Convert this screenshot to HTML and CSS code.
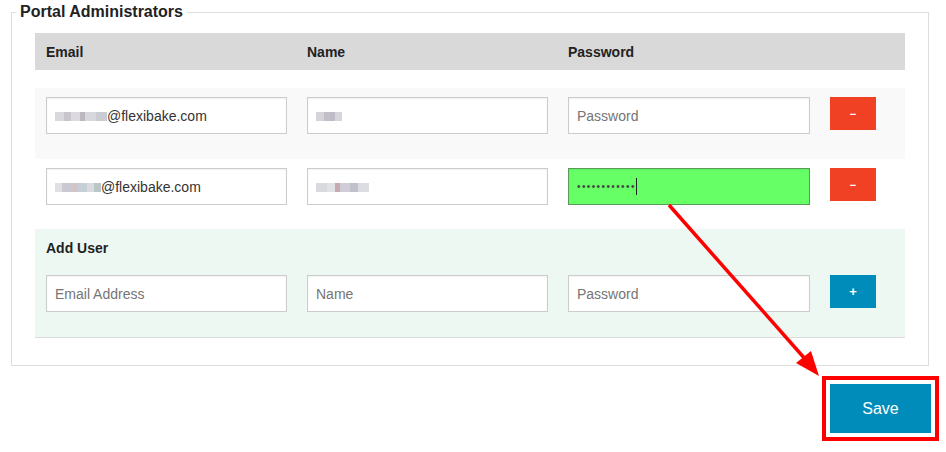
FILE: index.html
```html
<!DOCTYPE html>
<html lang="en">
<head>
    <meta charset="UTF-8">
    <title>Portal Administrators</title>
    <link rel="stylesheet" href="styles.css">
</head>
<body>
    <fieldset class="admins">
        <legend>Portal Administrators</legend>
        <div class="panel">
            <!-- header -->
            <div class="grid-row head">
                <div>Email</div>
                <div>Name</div>
                <div>Password</div>
                <div></div>
            </div>
            <div class="spacer"></div>

            <div class="grid-row user odd">
                <div class="field"><span class="mosaic m1"></span>@flexibake.com</div>
                <div class="field"><span class="mosaic m2"></span></div>
                <div class="field placeholder">Password</div>
                <button class="btn remove">&minus;</button>
            </div>

            <div class="grid-row user">
                <div class="field"><span class="mosaic m3"></span>@flexibake.com</div>
                <div class="field"><span class="mosaic m4"></span></div>
                <div class="field active">&bull;&bull;&bull;&bull;&bull;&bull;&bull;&bull;&bull;&bull;&bull;&bull;<span class="caret"></span></div>
                <button class="btn remove">&minus;</button>
            </div>

            <!-- add user -->
            <div class="add-user">
                <div class="add-title">Add User</div>
                <div class="grid-row inner">
                    <input type="text" placeholder="Email Address">
                    <input type="text" placeholder="Name">
                    <input type="password" placeholder="Password">
                    <button class="btn add">+</button>
                </div>
            </div>
        </div>
    </fieldset>

    <div class="actions">
        <div class="highlight">
            <button class="save-btn">Save</button>
        </div>
    </div>

    <svg class="arrow" width="946" height="452" viewBox="0 0 946 452">
        <line x1="669" y1="205" x2="806" y2="360" stroke="#ff0000" stroke-width="3.5"/>
        <polygon points="819,376 796,363 811,351" fill="#ff0000"/>
    </svg>
</body>
</html>
```

FILE: styles.css
```css
:root {
    --border: #dddddd;
    --input-border: #cccccc;
    --head-bg: #d9d9d9;
    --odd-bg: #f9f9f9;
    --add-bg: #eef8f2;
    --alert: #f04124;
    --primary: #008cba;
}

body {
    font-family: 'Liberation Sans', Arial, sans-serif;
    margin: 0;
    padding: 3px 7px 0 11px;
    color: #222222;
    background: #ffffff;
    position: relative;
}

.admins {
    margin: 0 10px 0 0;
    padding: 0 4px 27px;
    border: 1px solid var(--border);
}

.admins legend {
    font-size: 16px;
    font-weight: bold;
    padding: 0 4px;
    line-height: 18px;
    color: #222222;
}

.panel {
    margin: 12px 19px 0;
    border-bottom: 1px solid var(--border);
}

.grid-row {
    display: grid;
    grid-template-columns: 241px 241px 242px 46px;
    column-gap: 20px;
    padding: 0 11px;
}

.head {
    background: var(--head-bg);
    height: 37px;
    align-items: center;
    font-size: 14px;
    font-weight: bold;
}

.spacer {
    height: 18px;
}

.user {
    padding-top: 9px;
    padding-bottom: 24px;
    align-items: start;
}

.odd {
    background: var(--odd-bg);
    padding-bottom: 25px;
}

.field,
.grid-row input {
    box-sizing: border-box;
    height: 37px;
    border: 1px solid var(--input-border);
    background: #ffffff;
    font-family: inherit;
    font-size: 14px;
    color: #333333;
    padding: 0 8px;
    display: flex;
    align-items: center;
    box-shadow: inset 0 1px 2px rgba(0, 0, 0, 0.06);
}

.grid-row input {
    width: 100%;
    outline: none;
}

.grid-row input::placeholder,
.placeholder {
    color: #757575;
}

.field.active {
    background: #66ff66;
    border-color: #5c9a5c;
    font-size: 10px;
    letter-spacing: 1.4px;
    color: #444444;
}

.caret {
    display: inline-block;
    width: 1px;
    height: 17px;
    background: #222222;
    margin-left: 0;
}

.mosaic {
    display: inline-block;
    height: 9px;
    margin-top: 1px;
}

.m1 {
    width: 52px;
    background: linear-gradient(90deg, #d9d9dd 0 18%, #c8c5cc 18% 30%, #dcdadf 30% 48%, #bcb8c0 48% 58%, #d6d8dd 58% 78%, #c9ccd3 78% 100%);
}

.m2 {
    width: 26px;
    background: linear-gradient(90deg, #d6d4d9 0 30%, #c4bec7 30% 55%, #bfbcc9 55% 75%, #d8d6dc 75% 100%);
}

.m3 {
    width: 46px;
    background: linear-gradient(90deg, #e0dfe3 0 15%, #c8c9d2 15% 35%, #d2c4c9 35% 50%, #c6cfd6 50% 70%, #d9dbe0 70% 85%, #b9c7c7 85% 100%);
}

.m4 {
    width: 53px;
    background: linear-gradient(90deg, #d8dade 0 20%, #e2e1e4 20% 35%, #c7a9b0 35% 45%, #cfcdd6 45% 65%, #c2bfcc 65% 80%, #dcdde2 80% 100%);
}

.btn {
    height: 33px;
    border: none;
    color: #ffffff;
    font-family: inherit;
    font-size: 11px;
    font-weight: bold;
    padding: 0;
    cursor: pointer;
}

.remove {
    background: var(--alert);
}

.add {
    background: var(--primary);
    font-size: 13px;
}

.add-user {
    background: var(--add-bg);
    padding: 9px 0 25px;
}

.add-title {
    font-size: 14px;
    font-weight: bold;
    line-height: 20px;
    padding: 0 11px;
    margin-bottom: 17px;
}

.inner {
    align-items: start;
}

.actions {
    display: flex;
    justify-content: flex-end;
    margin-top: 10px;
}

.highlight {
    border: 4px solid #ff0000;
    padding: 4px;
}

.save-btn {
    display: block;
    width: 101px;
    height: 49px;
    background: var(--primary);
    color: #ffffff;
    border: none;
    font-family: inherit;
    font-size: 16px;
}

.arrow {
    position: absolute;
    top: 0;
    left: 0;
    pointer-events: none;
}
```
